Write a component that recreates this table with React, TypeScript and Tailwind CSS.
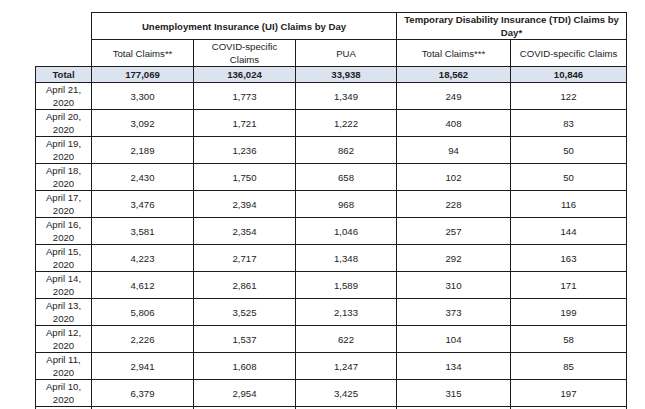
const ROWS: [string, string, string, string, string, string][] = [
  ['April 21,', '3,300', '1,773', '1,349', '249', '122'],
  ['April 20,', '3,092', '1,721', '1,222', '408', '83'],
  ['April 19,', '2,189', '1,236', '862', '94', '50'],
  ['April 18,', '2,430', '1,750', '658', '102', '50'],
  ['April 17,', '3,476', '2,394', '968', '228', '116'],
  ['April 16,', '3,581', '2,354', '1,046', '257', '144'],
  ['April 15,', '4,223', '2,717', '1,348', '292', '163'],
  ['April 14,', '4,612', '2,861', '1,589', '310', '171'],
  ['April 13,', '5,806', '3,525', '2,133', '373', '199'],
  ['April 12,', '2,226', '1,537', '622', '104', '58'],
  ['April 11,', '2,941', '1,608', '1,247', '134', '85'],
  ['April 10,', '6,379', '2,954', '3,425', '315', '197'],
  ['April 09,', '4,126', '2,512', '1,873', '268', '140'],
]

const cell = 'border border-[#1c1c1c] px-0.5 py-0 text-center align-middle'

export default function App() {
  return (
    <div className="h-[409px] w-[645px] overflow-hidden bg-white pl-[35px] pt-[12px] font-['Liberation_Sans',Arial,sans-serif] text-[9.6px] leading-[13px] text-[#222]">
      <table className="w-[591px] table-fixed border-collapse">
        <colgroup>
          <col className="w-[56px]" />
          <col className="w-[102px]" />
          <col className="w-[102px]" />
          <col className="w-[101px]" />
          <col className="w-[114px]" />
          <col className="w-[116px]" />
        </colgroup>
        <thead>
          <tr className="h-[27px]">
            <th rowSpan={2} className="p-0" />
            <th colSpan={3} className={`${cell} font-bold`}>
              Unemployment Insurance (UI) Claims by Day
            </th>
            <th colSpan={2} className={`${cell} font-bold`}>
              <span className="whitespace-nowrap">Temporary Disability Insurance (TDI) Claims by</span>
              <br />
              Day*
            </th>
          </tr>
          <tr className="h-[26px]">
            <th className={`${cell} font-normal`}>Total Claims**</th>
            <th className={`${cell} font-normal`}>
              COVID-specific
              <br />
              Claims
            </th>
            <th className={`${cell} font-normal`}>PUA</th>
            <th className={`${cell} font-normal`}>Total Claims***</th>
            <th className={`${cell} font-normal`}>COVID-specific Claims</th>
          </tr>
        </thead>
        <tbody>
          <tr className="h-[16px] bg-[#dbe3ef] font-bold">
            <td className={cell}>Total</td>
            <td className={cell}>177,069</td>
            <td className={cell}>136,024</td>
            <td className={cell}>33,938</td>
            <td className={cell}>18,562</td>
            <td className={cell}>10,846</td>
          </tr>
          {ROWS.map((r) => (
            <tr key={r[0]} className="h-[27px]">
              <td className={cell}>
                {r[0]}
                <br />
                2020
              </td>
              {r.slice(1).map((v, i) => (
                <td key={i} className={cell}>
                  {v}
                </td>
              ))}
            </tr>
          ))}
        </tbody>
      </table>
    </div>
  )
}
